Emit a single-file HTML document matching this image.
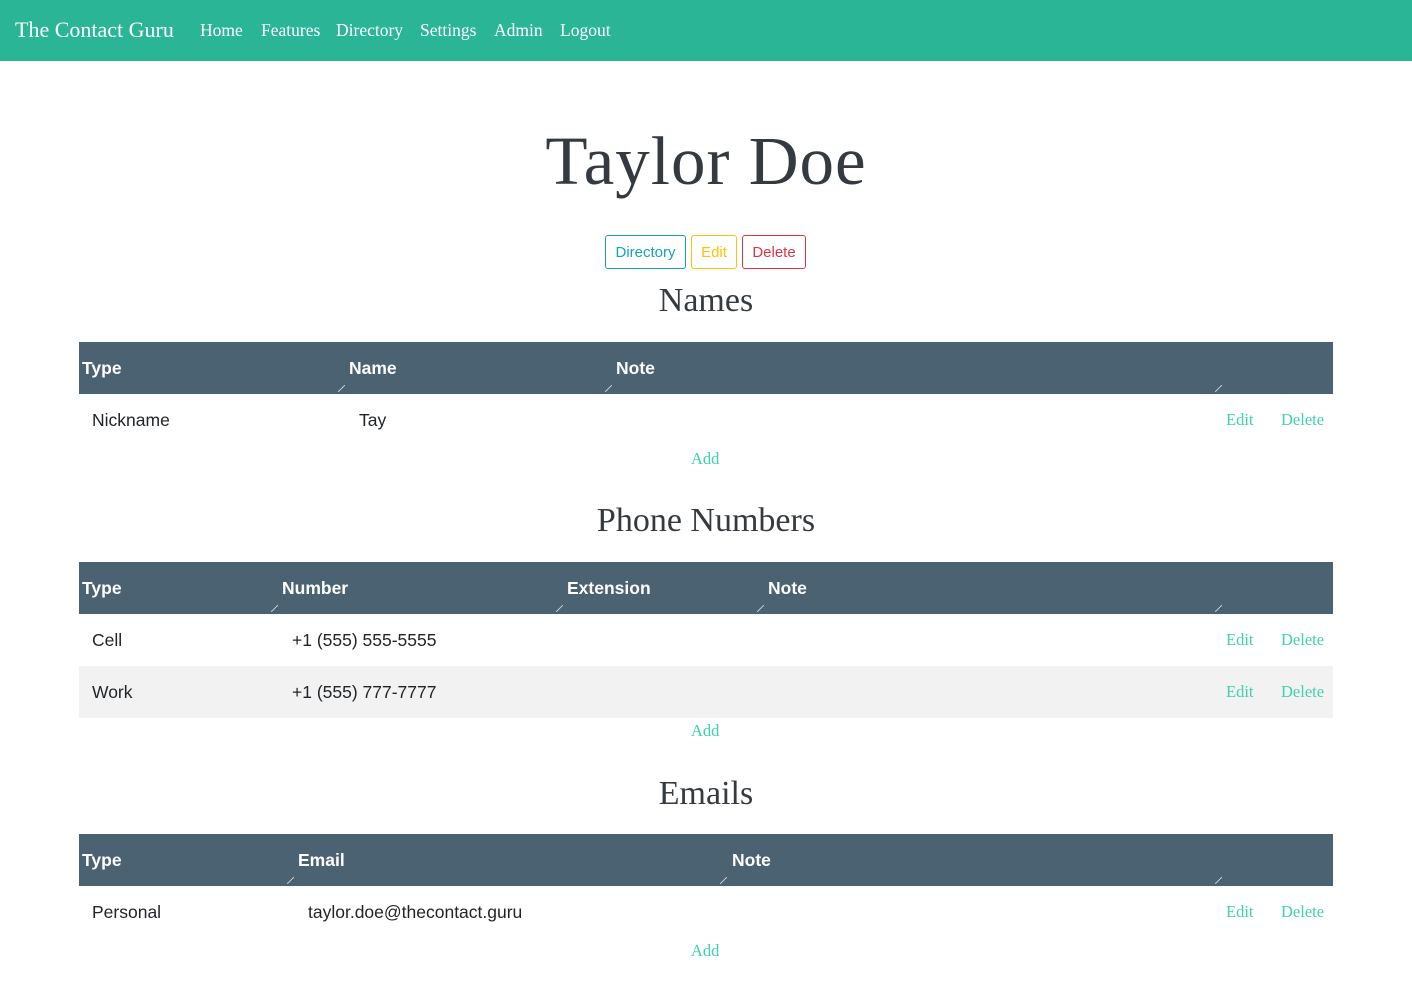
<!DOCTYPE html>
<html><head><meta charset="utf-8"><style>
*{margin:0;padding:0;box-sizing:border-box}
body{width:1412px;height:985px;position:relative;background:#fff;font-family:"Liberation Sans",sans-serif;color:#212529;overflow:hidden}
.a{position:absolute;white-space:nowrap}
.serif{font-family:"Liberation Serif",serif}
.nav{position:absolute;left:0;top:0;width:1412px;height:61px;background:#2bb597}
.nav span{position:absolute;top:20px;color:#fff;font-family:"Liberation Serif",serif;font-size:17.5px;white-space:nowrap}
.th{position:absolute;left:79px;width:1254px;height:52px;background:#4b6272}
.th span{position:absolute;top:16px;color:#fff;font-weight:bold;font-size:17.5px}
.th i{position:absolute;top:43px;width:7px;height:7px;background:linear-gradient(135deg,transparent 45%,#ddd 45%,#ddd 55%,transparent 55%);opacity:.8}
.row span{position:absolute;font-size:17.5px;color:#212529;white-space:nowrap}
.lnk{position:absolute;font-family:"Liberation Serif",serif;font-size:16.5px;color:#3fd1b0;white-space:nowrap}
.h2{position:absolute;left:0;width:1412px;text-align:center;font-family:"Liberation Serif",serif;font-size:34px;color:#343a40}
.btn{position:absolute;top:235px;height:34px;border:1px solid;border-radius:3px;font-size:15px;text-align:center;line-height:33px}
</style></head><body>
<div class="nav">
<span style="left:15px;top:17px;font-size:22px">The Contact Guru</span>
<span style="left:200px">Home</span>
<span style="left:261px">Features</span>
<span style="left:336px">Directory</span>
<span style="left:420px">Settings</span>
<span style="left:494px">Admin</span>
<span style="left:560px">Logout</span>
</div>
<div class="a serif" style="left:0;width:1412px;text-align:center;top:122px;font-size:69px;color:#343a40;letter-spacing:1px">Taylor Doe</div>
<div class="btn" style="left:605px;width:81px;color:#17a2b8;border-color:#17a2b8">Directory</div>
<div class="btn" style="left:691px;width:46px;color:#ffc107;border-color:#ffc107">Edit</div>
<div class="btn" style="left:742px;width:64px;color:#dc3545;border-color:#dc3545">Delete</div>

<div class="h2" style="top:282px">Names</div>
<div class="th" style="top:342px"><span style="left:3px">Type</span><span style="left:270px">Name</span><span style="left:537px">Note</span><i style="left:259px"></i><i style="left:526px"></i><i style="left:1136px"></i></div>
<div class="row"><span style="left:92px;top:410px">Nickname</span><span style="left:359px;top:410px">Tay</span></div>
<div class="lnk" style="left:1226px;top:410px">Edit</div><div class="lnk" style="left:1281px;top:410px">Delete</div>
<div class="lnk" style="left:691px;top:449px">Add</div>

<div class="h2" style="top:502px">Phone Numbers</div>
<div class="th" style="top:562px"><span style="left:3px">Type</span><span style="left:203px">Number</span><span style="left:488px">Extension</span><span style="left:689px">Note</span><i style="left:192px"></i><i style="left:477px"></i><i style="left:678px"></i><i style="left:1136px"></i></div>
<div class="row"><span style="left:92px;top:630px">Cell</span><span style="left:292px;top:630px">+1 (555) 555-5555</span></div>
<div class="lnk" style="left:1226px;top:630px">Edit</div><div class="lnk" style="left:1281px;top:630px">Delete</div>
<div class="a" style="left:79px;top:666px;width:1254px;height:52px;background:#f2f2f2"></div>
<div class="row"><span style="left:92px;top:682px">Work</span><span style="left:292px;top:682px">+1 (555) 777-7777</span></div>
<div class="lnk" style="left:1226px;top:682px">Edit</div><div class="lnk" style="left:1281px;top:682px">Delete</div>
<div class="lnk" style="left:691px;top:721px">Add</div>

<div class="h2" style="top:775px">Emails</div>
<div class="th" style="top:834px"><span style="left:3px">Type</span><span style="left:219px">Email</span><span style="left:653px">Note</span><i style="left:208px"></i><i style="left:641px"></i><i style="left:1136px"></i></div>
<div class="row"><span style="left:92px;top:902px">Personal</span><span style="left:308px;top:902px">taylor.doe@thecontact.guru</span></div>
<div class="lnk" style="left:1226px;top:902px">Edit</div><div class="lnk" style="left:1281px;top:902px">Delete</div>
<div class="lnk" style="left:691px;top:941px">Add</div>
</body></html>
